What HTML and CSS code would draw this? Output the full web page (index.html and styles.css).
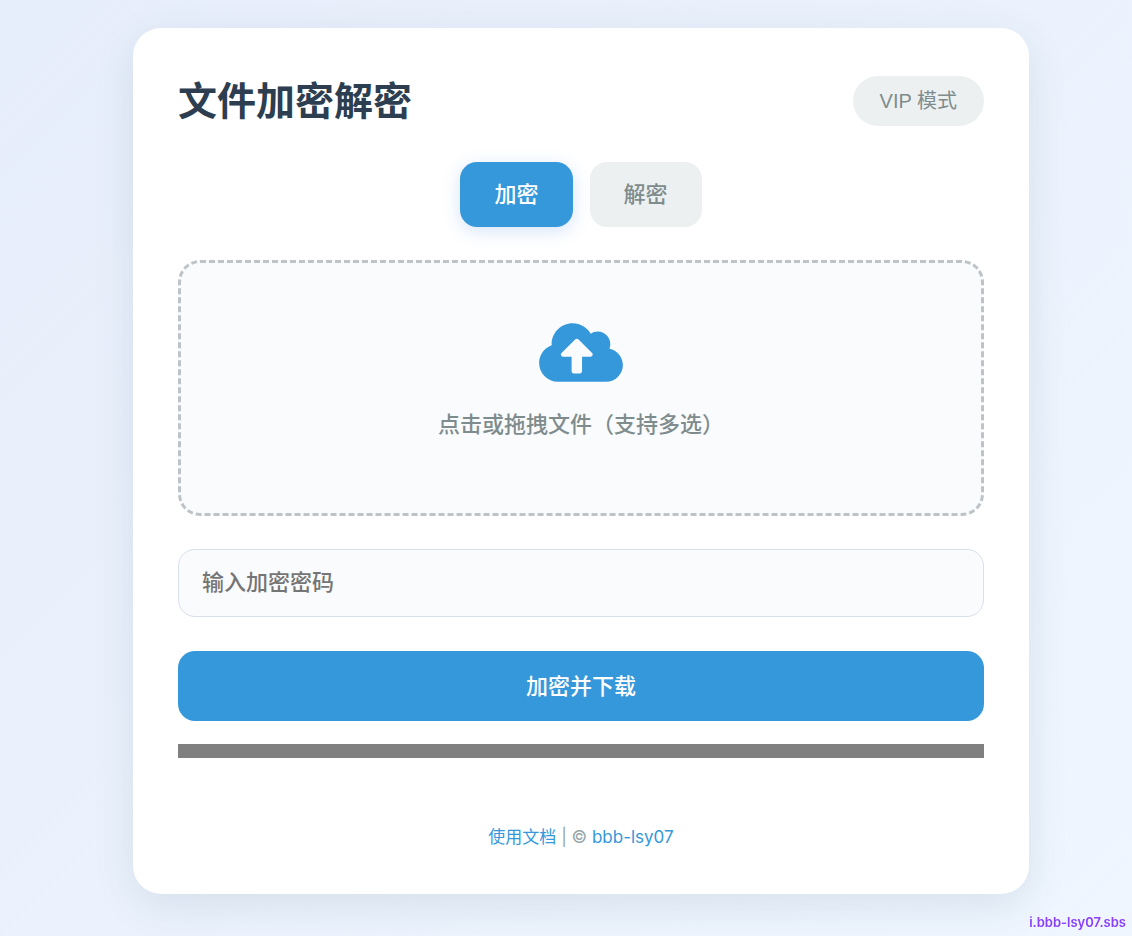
FILE: index.html
```
<!DOCTYPE html>
<html lang="zh-CN">
<head>
  <meta charset="UTF-8" />
  <meta name="viewport" content="width=device-width, initial-scale=1" />
  <title>文件加密解密</title>
  <link rel="stylesheet" href="styles.css">
</head>
<body>
  <main class="container">
    <header class="header">
      <h1>文件加密解密</h1>
      <button type="button" class="vip-btn">VIP 模式</button>
    </header>

    <div class="tabs">
      <button type="button" class="tab active">加密</button>
      <button type="button" class="tab">解密</button>
    </div>

    <label class="drop-zone" for="file-input">
      <svg class="upload-icon" viewBox="0 0 640 512" aria-hidden="true">
        <path d="M537.6 226.6c4.1-10.7 6.4-22.4 6.4-34.6 0-53-43-96-96-96-19.7 0-38.1 6-53.3 16.2C367 64.2 315.3 32 256 32c-88.4 0-160 71.6-160 160 0 2.7.1 5.4.2 8.1C40.2 219.8 0 273.2 0 336c0 79.5 64.5 144 144 144h368c70.7 0 128-57.3 128-128 0-61.9-44-113.6-102.4-125.4zM393.4 288H328v112c0 8.8-7.2 16-16 16h-48c-8.8 0-16-7.2-16-16V288h-65.4c-14.3 0-21.4-17.2-11.3-27.3l105.4-105.4c6.2-6.2 16.4-6.2 22.6 0l105.4 105.4c10.1 10.1 2.9 27.3-11.3 27.3z"/>
      </svg>
      <span class="drop-text">点击或拖拽文件（支持多选）</span>
      <input type="file" id="file-input" class="file-input" multiple />
    </label>

    <input type="password" class="password" placeholder="输入加密密码" aria-label="输入加密密码" />
    <button type="button" class="submit-btn">加密并下载</button>
    <progress class="progress" value="0" max="100" aria-label="进度"></progress>

    <footer class="footer">
      <a href="#">使用文档</a> | © <a href="#">bbb-lsy07</a>
    </footer>
  </main>

  <div class="watermark">i.bbb-lsy07.sbs</div>
</body>
</html>
```
FILE: styles.css
```
* {
  margin: 0;
  padding: 0;
  box-sizing: border-box;
}

body {
  min-height: 100vh;
  padding: 28px 0 28px 30px;
  background: linear-gradient(135deg, #e7eefb, #eff6ff);
  font-family: Inter, "Noto Sans CJK SC", sans-serif;
  color: #2c3e50;
}

button,
input {
  font-family: "Liberation Sans", "Noto Sans CJK SC", sans-serif;
}

.container {
  width: 100%;
  max-width: 896px;
  margin: 0 auto;
  padding: 45px;
  background: #fff;
  border-radius: 28px;
  box-shadow: 0 11px 42px rgba(30, 70, 80, 0.11);
}

.header {
  display: flex;
  justify-content: space-between;
  align-items: center;
  margin-bottom: 33px;
}

.header h1 {
  font-size: 39px;
  line-height: 56px;
  font-weight: 700;
}

.vip-btn {
  height: 50px;
  padding: 0 27px 3px;
  border: none;
  border-radius: 25px;
  background: #ecf0f1;
  color: #7f8c8d;
  font-size: 20px;
  cursor: pointer;
}

.tabs {
  display: flex;
  justify-content: center;
  gap: 17px;
  margin-bottom: 33px;
}

.tab {
  height: 65px;
  padding: 0 34px 5px;
  border: none;
  border-radius: 17px;
  background: #ecf0f1;
  color: #7f8c8d;
  font-size: 22px;
  font-weight: 500;
  cursor: pointer;
}

.tab.active {
  background: #3498db;
  color: #fff;
  box-shadow: 0 4px 18px rgba(52, 120, 219, 0.2);
}

.drop-zone {
  display: flex;
  flex-direction: column;
  align-items: center;
  margin-bottom: 33px;
  padding: 56px 20px 72px;
  border: 3px dashed #bdc3c7;
  border-radius: 22px;
  background: #fafbfd;
  cursor: pointer;
}

.upload-icon {
  width: 84px;
  height: 67px;
  margin-bottom: 22px;
  fill: #3498db;
}

.drop-text {
  color: #7f8c8d;
  font-size: 22px;
  line-height: 33px;
  font-weight: 500;
}

.file-input {
  display: none;
}

.password {
  display: block;
  width: 100%;
  height: 68px;
  margin-bottom: 34px;
  padding: 0 23px;
  border: 1px solid #d8e0ea;
  border-radius: 17px;
  background: #fafbfd;
  font-size: 22px;
  font-weight: 500;
}

.password::placeholder {
  color: #757575;
}

.submit-btn {
  display: block;
  width: 100%;
  height: 70px;
  margin-bottom: 23px;
  padding-bottom: 5px;
  border: none;
  border-radius: 17px;
  background: #3498db;
  color: #fff;
  font-size: 22px;
  font-weight: 500;
  cursor: pointer;
}

.progress {
  display: block;
  width: 100%;
  height: 14px;
  border: none;
  background: #808080;
  appearance: none;
}

.progress::-webkit-progress-bar {
  background: #808080;
}

.footer {
  margin-top: 67px;
  color: #95a5a6;
  font-size: 17px;
  line-height: 24px;
  text-align: center;
}

.footer a {
  color: #3498db;
  text-decoration: none;
}

.watermark {
  position: fixed;
  right: 6px;
  bottom: 5px;
  color: #8a3ffc;
  font-size: 13px;
  line-height: 18px;
  font-weight: 600;
}
```
